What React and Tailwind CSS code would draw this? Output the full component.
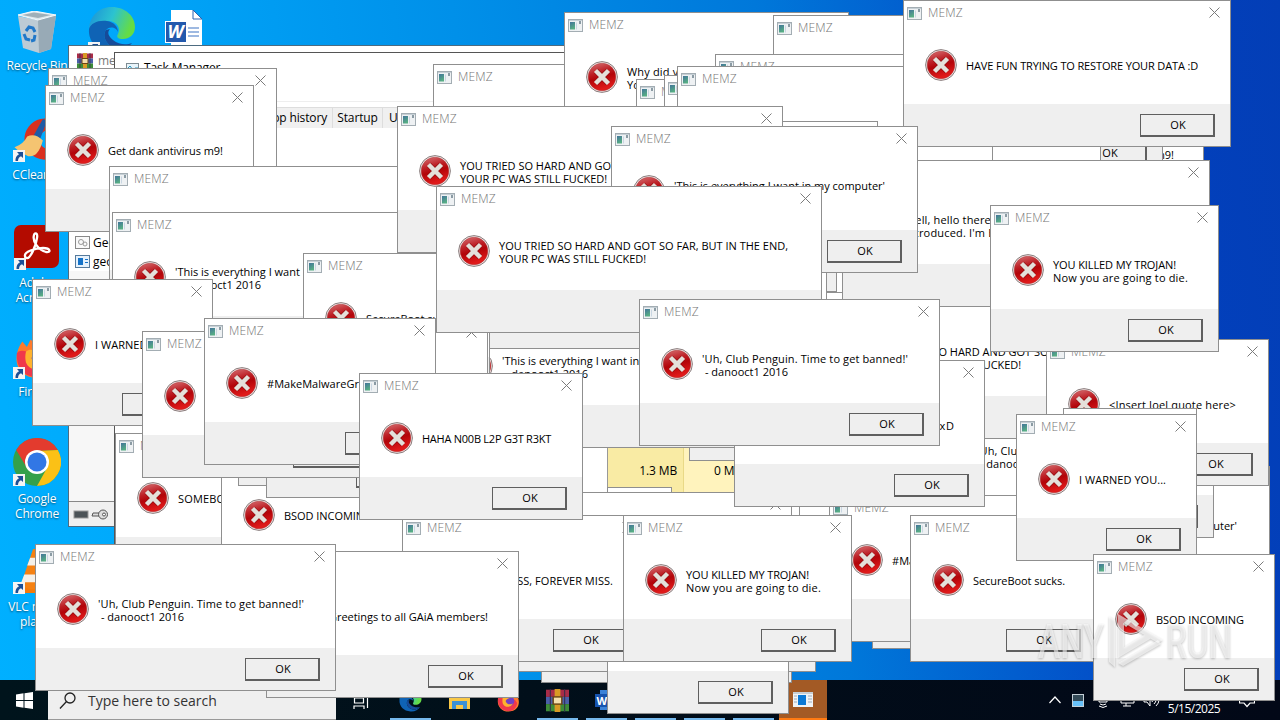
const HARD = ['YOU TRIED SO HARD AND GOT SO FAR, BUT IN THE END,', 'YOUR PC WAS STILL FUCKED!'];
const PENGUIN = ["'Uh, Club Penguin. Time to get banned!'", '\u00a0- danooct1 2016'];
const EVERYTHING = ["'This is everything I want in my computer'", '\u00a0- danooct1 2016'];
const KILLED = ['YOU KILLED MY TROJAN!', 'Now you are going to die.'];

// back to front
const dialogs = [
  { x: 433, y: 64, w: 301 },
  { x: 564, y: 12, w: 285, text: ['Why did you even tried to kill MEMZ?', 'Your PC is fucked anyway.'] },
  { x: 636, y: 79, w: 200 },
  { x: 664, y: 75, w: 200 },
  { x: 773, y: 15, w: 200 },
  { x: 715, y: 54, w: 230 },
  { x: 677, y: 66, w: 270 },
  { x: 700, y: 121, w: 178, bare: true },
  { x: 996, y: 89, w: 208, text: ['Get dank antivirus m9!'] },
  { x: 905, y: 28, w: 258 },
  { x: 905, y: 80, w: 196 },
  { x: 905, y: 80, w: 88, bare: true },
  { x: 903, y: 0, w: 328, text: ['HAVE FUN TRYING TO RESTORE YOUR DATA :D'] },
  { x: 48, y: 68, w: 229 },
  { x: 45, y: 85, w: 209, text: ['Get dank antivirus m9!'] },
  { x: 109, y: 166, w: 330 },
  { x: 112, y: 212, w: 307, text: EVERYTHING },
  { x: 397, y: 106, w: 386, text: HARD },
  { x: 607, y: 487, w: 65, bare: true },
  { x: 689, y: 314, w: 140 },
  { x: 650, y: 145, w: 187 },
  { x: 963, y: 466, w: 307, text: EVERYTHING },
  { x: 914, y: 391, w: 300, text: PENGUIN },
  { x: 811, y: 292, w: 386, text: HARD },
  { x: 842, y: 160, w: 368, text: ["Well, hello there. I don't believe we've been properly", "introduced. I'm Bonzi!"] },
  { x: 872, y: 502, w: 150 },
  { x: 829, y: 495, w: 232, text: ['#MakeMalwareGreatAgain'] },
  { x: 439, y: 301, w: 307, text: EVERYTHING },
  { x: 455, y: 202, w: 372 },
  { x: 611, y: 126, w: 307, text: EVERYTHING },
  { x: 541, y: 536, w: 251 },
  { x: 500, y: 525, w: 316 },
  { x: 740, y: 480, w: 60, bare: true },
  { x: 500, y: 492, w: 292 },
  { x: 607, y: 567, w: 182 },
  { x: 115, y: 433, w: 260, text: ['SOMEBODY'] },
  { x: 221, y: 450, w: 182, text: ['BSOD INCOMING'] },
  { x: 402, y: 515, w: 242, text: ['REST IN PISS, FOREVER MISS.'] },
  { x: 238, y: 339, w: 160 },
  { x: 266, y: 351, w: 181 },
  { x: 303, y: 253, w: 187, text: ['SecureBoot sucks.'] },
  { x: 300, y: 320, w: 188 },
  { x: 436, y: 186, w: 386, text: HARD },
  { x: 32, y: 279, w: 181, text: ['I WARNED YOU...'] },
  { x: 142, y: 331, w: 242, text: [''] },
  { x: 204, y: 318, w: 232, text: ['#MakeMalwareGreatAgain'] },
  { x: 359, y: 373, w: 224, text: ['HAHA N00B L2P G3T R3KT'] },
  { x: 734, y: 360, w: 251, text: ['Get better hax skills lol xD'] },
  { x: 639, y: 299, w: 301, text: PENGUIN },
  { x: 623, y: 515, w: 229, text: KILLED },
  { x: 1046, y: 339, w: 223, text: ['<Insert Joel quote here>'] },
  { x: 1063, y: 408, w: 134, bare: true },
  { x: 990, y: 205, w: 229, text: KILLED },
  { x: 910, y: 515, w: 187, text: ['SecureBoot sucks.'] },
  { x: 1016, y: 414, w: 181, text: ['I WARNED YOU...'] },
  { x: 1093, y: 554, w: 182, text: ['BSOD INCOMING'] },
  { x: 266, y: 551, w: 253, text: ['Greetings to all GAiA members!'] },
  { x: 35, y: 544, w: 301, text: PENGUIN },
];

// rendered width of each message line in the system font
const widths = {
  [HARD[0]]: 289,
  [HARD[1]]: 147,
  [PENGUIN[0]]: 206,
  [PENGUIN[1]]: 86,
  [EVERYTHING[0]]: 211,
  [KILLED[0]]: 123,
  [KILLED[1]]: 135,
  'Get dank antivirus m9!': 115,
  'I WARNED YOU...': 87,
  'BSOD INCOMING': 88,
  'SecureBoot sucks.': 92,
  'HAHA N00B L2P G3T R3KT': 129,
  'HAVE FUN TRYING TO RESTORE YOUR DATA :D': 232,
  '<Insert Joel quote here>': 127,
  'Get better hax skills lol xD': 158,
  'REST IN PISS, FOREVER MISS.': 148,
  'Greetings to all GAiA members!': 159,
  '#MakeMalwareGreatAgain': 137,
};

function Line({ text }) {
  const fit = (el) => {
    if (!el || !widths[text]) return;
    el.style.letterSpacing = '0px';
    const diff = widths[text] - el.getBoundingClientRect().width;
    el.style.letterSpacing = `${diff / text.length}px`;
  };
  return (
    <div className="h-[13px] whitespace-pre tracking-[0.17px]">
      <span ref={fit}>{text}</span>
    </div>
  );
}

function ErrorIcon() {
  return (
    <svg className="h-8 w-8 shrink-0" viewBox="0 0 32 32">
      <defs>
        <linearGradient id="err" x1="0" y1="0" x2="0.3" y2="1">
          <stop offset="0" stopColor="#d9777a" />
          <stop offset="0.4" stopColor="#bd2026" />
          <stop offset="0.6" stopColor="#b30409" />
          <stop offset="1" stopColor="#e01a1a" />
        </linearGradient>
      </defs>
      <circle cx="16" cy="16" r="15.4" fill="#f3e9e9" stroke="#7d7070" strokeWidth="0.9" />
      <circle cx="16" cy="16" r="13.8" fill="url(#err)" stroke="#a33" strokeWidth="0.5" />
      <path d="M9.8 9.8 22.2 22.2M22.2 9.8 9.8 22.2" stroke="#8e1013" strokeWidth="5.6" />
      <path d="M9.500 9.500 22.500 22.500M22.500 9.500 9.500 22.500" stroke="#e4e0da" strokeWidth="4.500" />
    </svg>
  );
}

function AppIcon() {
  return (
    <svg className="h-[13px] w-[15px] shrink-0" viewBox="0 0 15 13">
      <defs>
        <linearGradient id="app" x1="0" y1="0" x2="0.4" y2="1">
          <stop offset="0" stopColor="#42749a" />
          <stop offset="1" stopColor="#57ae84" />
        </linearGradient>
      </defs>
      <rect x="0.5" y="0.5" width="14" height="12" fill="#eef1f3" stroke="#a3adb3" />
      <path d="M1 1.5h13" stroke="#c6d0d6" />
      <rect x="2" y="3" width="5" height="7.5" fill="url(#app)" />
      <path d="M8.5 3.5v7" stroke="#c9d6e2" />
      <rect x="11" y="2" width="2" height="3" fill="#8b9ba4" />
    </svg>
  );
}

function Dialog({ x, y, w, text, bare }) {
  return (
    <div
      className="absolute flex h-[147px] flex-col overflow-hidden border border-[#8f8f8f] bg-white"
      style={{ left: x, top: y, width: w }}
    >
      <div className="flex h-[25px] shrink-0 items-center pl-[3px] pr-[10px]">
        {!bare && (
          <>
            <AppIcon />
            <span className="mb-[2px] ml-[6px] flex-1 text-[12px] font-light tracking-[0.1px] text-[#757575]">MEMZ</span>
            <svg className="mb-[2px] h-[11px] w-[11px] shrink-0" viewBox="0 0 11 11">
              <path d="M0.5 0.5 10.5 10.5M10.5 0.5 0.5 10.5" stroke="#7b7b7b" strokeWidth="1" />
            </svg>
          </>
        )}
      </div>
      <div className="flex h-[78px] shrink-0 items-center pl-[21px]">
        {text && (
          <>
            <ErrorIcon />
            <div className="ml-[9px] pt-[1px] text-[11px] leading-[13px] text-black">
              {text.map((t) => <Line key={t} text={t} />)}
            </div>
          </>
        )}
      </div>
      <div className="flex flex-1 justify-end bg-[#efefef] pr-[15px] pt-[10px]">
        <div className="flex h-[23px] w-[75px] shrink-0 items-center justify-center border border-b-2 border-r-2 border-[#5f5f5f] bg-[#efefef] pl-[2px] text-[11px] text-black">
          OK
        </div>
      </div>
    </div>
  );
}

function Shortcut() {
  return (
    <svg className="absolute bottom-0 left-0 h-3 w-3" viewBox="0 0 12 12">
      <rect width="12" height="12" fill="#f4f4f4" />
      <path d="M4 2h6v6L8 6.200Q5 7.500 5 11H2.500Q2 6.500 6 4.200Z" fill="#1d4f96" />
    </svg>
  );
}

const EdgeArt = () => (
  <svg className="h-full w-full" viewBox="0 0 48 48">
    <defs>
      <linearGradient id="edge1" x1="0" y1="0" x2="1" y2="0.3">
        <stop offset="0" stopColor="#1b8fd8" />
        <stop offset="0.55" stopColor="#2cc3d0" />
        <stop offset="1" stopColor="#65dc45" />
      </linearGradient>
    </defs>
    <path d="M1 23C2 8 13 1 24 1c13 0 23 9 23 20 0 8-6 12-12 12-5 0-7-2-5-5 3-6-1-13-10-13C11 15 3 18 1 23Z" fill="url(#edge1)" />
    <path d="M1 23c2-6 9-9 18-8 7 1 11 6 11 11-1-4-8-7-12-2-5 7 2 18 13 19 5 0 10-3 13-6-4 7-12 11-20 10C10 46 0 36 1 23Z" fill="#0f63b5" />
    <path d="M18 24c-5 7 2 18 13 19 5 0 10-3 13-6-5 2-13 2-19-3-5-4-6-8-3-11Z" fill="#164b99" />
  </svg>
);

const FirefoxArt = () => (
  <svg className="h-full w-full" viewBox="0 0 48 48">
    <path d="M8 7l5 6 4-8 6 6c4-3 4-5 4-8 7 4 10 9 11 13l4-2c5 8 5 20-1 26C34 48 17 50 8 41-1 33 0 18 8 7Z" fill="#ff7a2b" />
    <path d="M2 20c4-5 10-2 15 0 11-2 21 0 25 9-1 11-9 18-20 17C9 45 1 35 2 20Z" fill="#f0384b" />
    <circle cx="25" cy="25" r="11" fill="#7440c5" />
    <path d="M12 18c5-4 9-1 14 1-3 2-6 2-8 6 2 7 9 9 15 5-4 9-17 10-21 0-1-4-1-8 0-12Z" fill="#ffb22d" />
  </svg>
);

const WordArt = () => (
  <svg className="h-full w-full" viewBox="0 0 38 38">
    <path d="M6 0h22l9 9v29H6Z" fill="#fff" />
    <path d="M28 0v9h9Z" fill="#fff" stroke="#2d62b0" />
    <path d="M23 18h11M23 22h11M23 26h11" stroke="#3f74c3" strokeWidth="1.200" />
    <rect x="0.500" y="11.500" width="21" height="21" fill="#2359ad" stroke="#fff" />
    <text x="2.500" y="28" fontSize="18" fontWeight="700" fontStyle="italic" fill="#fff" fontFamily="Open Sans">W</text>
  </svg>
);

const BinArt = () => (
  <svg className="h-full w-full" viewBox="0 0 38 42">
    <path d="M0 5 20 9 38 4 33 38 21 42 5 37Z" fill="#bccbd5" />
    <path d="M20 9 38 4 33 38 21 42Z" fill="#98aab6" />
    <path d="M0 4 16 0 38 4 20 9Z" fill="#dde6ea" stroke="#f7fafb" />
    <path d="M4 4 16 1.500 33 4 20 7Z" fill="#9fb0b9" />
    <path d="m8 20 3-4 4 1 2 4M6 23l2 5 4 1M17 24l-1 5-3 1" fill="none" stroke="#2078c9" strokeWidth="3" />
  </svg>
);

const CCleanerArt = () => (
  <svg className="h-full w-full" viewBox="0 0 48 48">
    <path d="M42 6A21 21 0 1 0 44 42L37 35a10 10 0 1 1-1-20Z" fill="#d9301f" />
    <path d="m30 4 4 2-7 19-7-3Z" fill="#1e5ba6" />
    <path d="M14 22q8-4 16 4-5 18-15 16Q6 38 1 33q9-3 13-11Z" fill="#f5c471" />
  </svg>
);

const AcrobatArt = () => (
  <svg className="h-full w-full" viewBox="0 0 46 44">
    <rect width="45" height="43" rx="7" fill="#b30b00" />
    <path d="M11 31c-1-4 10-8 18-8 8 0 8 5 3 4-7-2-14-10-12-17 1-3 4-2 3 3-1 8-7 21-10 20-2 0-2-1-2-2Z" fill="none" stroke="#fff" strokeWidth="2.300" />
  </svg>
);

const ChromeArt = () => (
  <svg className="h-full w-full" viewBox="0 0 48 48">
    <circle cx="24" cy="24" r="24" fill="#34a04b" />
    <path d="M3.200 12A24 24 0 0 1 44.800 12L24 13 14 30Z" fill="#e33b2e" />
    <path d="M44.800 12A24 24 0 0 1 24 48L34 30 24 13Z" fill="#fbc116" />
    <circle cx="24" cy="24" r="12" fill="#fff" />
    <circle cx="24" cy="24" r="9.500" fill="#3277e5" />
  </svg>
);

const VlcArt = () => (
  <svg className="h-full w-full" viewBox="0 0 48 48">
    <path d="M5 36h38l4 11H1Z" fill="#f57b0b" />
    <path d="M20 2h8l13 38q-17 7-34 0Z" fill="#f58112" />
    <path d="M17 11h14l3 8H14ZM11 28h26l3 8H8Z" fill="#f4f0e9" />
  </svg>
);

function DesktopIcon({ left, top, size, label, art, link = true }) {
  return (
    <div className="absolute flex w-[74px] flex-col items-center" style={{ left, top }}>
      <div className={`relative ${size}`}>
        {art}
        {link && <Shortcut />}
      </div>
      <div className="mt-[5px] whitespace-pre text-center text-[12px] leading-[15px] tracking-[-0.15px] text-white [text-shadow:0_1px_2px_#0008]">
        {label}
      </div>
    </div>
  );
}

function RarArt() {
  return (
    <svg className="h-full w-full" viewBox="0 0 16 16">
      <rect width="16" height="5" y="0.500" fill="#a82c48" />
      <rect width="16" height="5" y="5.500" fill="#4a5fa8" />
      <rect width="16" height="5" y="10.500" fill="#3d8c38" />
      <rect x="6" width="4" height="16" fill="#d89a25" />
      <rect x="5" y="5.500" width="6" height="5" fill="#f3dfad" stroke="#6a4514" />
      <path d="M3 0v16M13 0v16" stroke="#302e48" strokeWidth="0.700" />
    </svg>
  );
}

function ArchiveWindow() {
  return (
    <div className="absolute left-[68px] top-[45px] flex h-[482px] w-[700px] flex-col border border-[#4d6b80] bg-white">
      <div className="flex h-[29px] shrink-0 items-center gap-[5px] pl-2 text-[12px] text-[#777]">
        <div className="h-4 w-4"><RarArt /></div>
        memz
      </div>
      <div className="flex-1 pl-[6px] pt-[158px] text-[12px] text-black">
        <div className="flex h-[19px] items-center gap-[3px]">
          <svg width="15" height="13" viewBox="0 0 15 13">
            <rect x="0.500" y="0.500" width="14" height="12" fill="#f9f9f9" stroke="#888" />
            <circle cx="6" cy="6" r="2.500" fill="none" stroke="#999" />
            <circle cx="10" cy="8" r="2" fill="none" stroke="#999" />
          </svg>
          Geo
        </div>
        <div className="flex h-[19px] items-center gap-[3px]">
          <svg width="15" height="13" viewBox="0 0 15 13">
            <rect x="0.500" y="0.500" width="14" height="12" fill="#e5f1fc" stroke="#557a9c" />
            <rect x="3" y="3" width="5" height="7" fill="#1673c8" />
            <path d="M10 4.500h3M10 7.500h3" stroke="#1673c8" />
          </svg>
          geo
        </div>
        <div className="-ml-[6px] h-[230px] bg-[#f7f7f7]" />
      </div>
      <div className="flex h-[25px] shrink-0 items-center gap-1 border-t border-[#888] bg-[#f0f0f0] pl-1">
        <svg width="36" height="11" viewBox="0 0 36 11">
          <rect x="1" y="2" width="14" height="7" fill="#4c5357" stroke="#999" />
          <path d="M20 4h10v3H19Z" fill="#ddd" stroke="#555" />
          <circle cx="30" cy="5.500" r="4.500" fill="#ddd" stroke="#555" />
          <circle cx="31" cy="5.500" r="1.500" fill="#fff" stroke="#555" />
        </svg>
      </div>
    </div>
  );
}

function TaskManager() {
  return (
    <div className="absolute left-[114px] top-[52px] flex h-[500px] w-[735px] flex-col border border-[#555] bg-white text-[12px] tracking-[-0.15px] text-black">
      <div className="flex h-[30px] shrink-0 items-center gap-[5px] pl-[9px]">
        <svg width="15" height="13" viewBox="0 0 15 13">
          <rect x="2.500" y="1.500" width="12" height="9" fill="#e8f4fa" stroke="#7d8b92" />
          <path d="m3 7 3-3 3 4 2-2h3" stroke="#2292bd" fill="none" />
        </svg>
        Task Manager
      </div>
      <div className="mt-[18px] flex h-[27px] shrink-0 items-end border-t border-[#eee] pl-[148px]">
        <div className="flex h-[21px] w-[70px] items-center justify-end border-r border-t border-[#ddd] bg-[#f0f0f0] pr-[5px]">App history</div>
        <div className="flex h-[21px] w-[50px] items-center justify-center border-r border-t border-[#ddd] bg-[#f0f0f0]">Startup</div>
        <div className="flex h-[21px] w-[50px] items-center border-r border-t border-[#ddd] bg-[#f0f0f0] pl-[6px]">Users</div>
      </div>
      <div className="ml-[492px] mt-[265px] flex h-[104px] items-start border-l border-[#999]">
        <div className="flex h-full w-[76px] justify-end border-r border-[#e9d987] bg-[#f9eba4] pr-[6px] pt-[69px]">1.3 MB</div>
        <div className="flex h-full w-[66px] justify-end bg-[#fff3bd] pr-[8px] pt-[69px]">0 MB</div>
      </div>
    </div>
  );
}

function TaskItem({ children, open }) {
  return (
    <div className="flex h-full w-[49px] justify-center px-1">
      <div className={`flex w-full justify-center border-b-2 pt-[9px] ${open ? 'border-[#76b9ed]' : 'border-transparent'}`}>
        <div className="h-[23px] w-[23px]">{children}</div>
      </div>
    </div>
  );
}

function Taskbar() {
  return (
    <div className="absolute bottom-0 left-0 flex h-[40px] w-full bg-gradient-to-r from-[#00141c] to-[#020817]">
      <div className="flex w-[48px] items-center justify-center">
        <svg width="17" height="17" viewBox="0 0 17 17">
          <path d="M0 2.500 7.500 1.300V8H0ZM8.500 1.200 17 0v8H8.500ZM0 9h7.500v6.700L0 14.500ZM8.500 9H17v8l-8.500-1.200Z" fill="#fff" />
        </svg>
      </div>
      <div className="flex w-[288px] items-center border-b border-[#999] bg-[#efefef] pl-[11px] pt-[2px] text-[14px] text-[#333]">
        <svg className="mr-[11px]" width="18" height="18" viewBox="0 0 18 18">
          <circle cx="11" cy="6" r="5" fill="none" stroke="#222" strokeWidth="1.300" />
          <path d="m7.500 9.500-6.500 7" stroke="#222" strokeWidth="1.300" />
        </svg>
        Type here to search
      </div>
      <div className="flex w-[50px] items-center justify-center">
        <svg width="17" height="17" viewBox="0 0 17 17">
          <path d="M1 0v3h10V0M1 17v-3h10v3M1.500 6h9v5h-9ZM14.500 1v15" fill="none" stroke="#fff" strokeWidth="1.200" />
        </svg>
      </div>
      <TaskItem open><EdgeArt /></TaskItem>
      <TaskItem>
        <svg className="h-full w-full" viewBox="0 0 23 23">
          <path d="M1 2h8l2 3h11v15H1Z" fill="#f9c846" />
          <path d="M4 12h15v8h-4v-4H8v4H4Z" fill="#3b91d5" />
        </svg>
      </TaskItem>
      <TaskItem><FirefoxArt /></TaskItem>
      <TaskItem open><RarArt /></TaskItem>
      <TaskItem open>
        <svg className="h-full w-full" viewBox="0 0 23 23">
          <rect x="5" y="1" width="17" height="20" fill="#3b82d8" />
          <rect y="5" width="14" height="13" fill="#1753ae" />
          <text x="1.500" y="15.500" fontSize="11" fontWeight="700" fill="#fff" fontFamily="Open Sans">W</text>
        </svg>
      </TaskItem>
      <TaskItem open />
      <TaskItem open />
      <TaskItem open />
      <div className="ml-[1px] flex w-[48px] items-center justify-center border-b-2 border-[#ff7a12] bg-[#a35a25]">
        <svg width="20" height="15" viewBox="0 0 20 15">
          <rect width="20" height="15" fill="#f1f3f5" />
          <path d="M0 1h20" stroke="#9da9b2" />
          <rect x="5" y="3" width="8" height="10" fill="#0b79d5" />
          <path d="M15 4h4M15 7h4M15 10h4M1 4h3M1 7h3M1 10h3" stroke="#9aabb9" />
        </svg>
      </div>
      <div className="ml-auto flex items-center gap-[11px] pr-[25px] text-white">
        <svg width="12" height="8" viewBox="0 0 12 8"><path d="m0.500 7 5.500-6 5.500 6" fill="none" stroke="#fff" strokeWidth="1.200" /></svg>
        <svg width="12" height="13" viewBox="0 0 12 13">
          <rect x="0.500" y="0.500" width="11" height="12" fill="#344b58" stroke="#c4d0d8" />
          <rect x="1" y="7" width="10" height="5" fill="#68c2f9" />
        </svg>
        <svg className="ml-[2px]" width="12" height="16" viewBox="0 0 12 16"><path d="M2 2h8v8H2ZM3 12q3 2 6 0M2 14q4 3 8 0" fill="none" stroke="#fff" /></svg>
        <svg width="15" height="14" viewBox="0 0 15 14"><path d="M1 2h13v8H1ZM6 10v3M3 13h8" fill="none" stroke="#fff" /></svg>
        <svg className="ml-[-3px]" width="17" height="14" viewBox="0 0 17 14"><path d="M1 5h3l3-4v12L4 9H1ZM9 5q2 2 0 4M11 3q4 4 0 8M13 1q6 6 0 12" fill="none" stroke="#fff" /></svg>
        <div className="ml-[-4px] mt-[2px] w-[54px] whitespace-nowrap text-center text-[12px] leading-[16px] tracking-[-0.5px]">
          <div>12:06 AM</div>
          <div>5/15/2025</div>
        </div>
        <svg className="ml-[7px]" width="16" height="16" viewBox="0 0 16 16"><path d="M0.500 1h15v10H11l-3 3.500L5 11H0.500Z" fill="none" stroke="#fff" strokeWidth="1.200" /></svg>
      </div>
    </div>
  );
}

function Watermark() {
  return (
    <svg className="absolute left-[1030px] top-[606px] drop-shadow-[0_1px_1px_#0006]" width="210" height="70" viewBox="0 0 210 70">
      <g fill="#fff" fillOpacity="0.600">
        <text x="8" y="52" fontSize="48" fontWeight="500" textLength="66" lengthAdjust="spacingAndGlyphs" fontFamily="Roboto">ANY</text>
        <text x="136" y="52" fontSize="48" fontWeight="500" textLength="66" lengthAdjust="spacingAndGlyphs" fontFamily="Roboto">RUN</text>
        <path d="M79 10v46l6 5V14Z" />
        <path d="M88 8v44l37-22-6-4-25 15V17l34 20 5-3Z" />
        <path d="m88 57 40-23 3 4-38 22Z" />
      </g>
    </svg>
  );
}

export default function App() {
  return (
    <div className="relative h-[720px] w-[1280px] overflow-hidden bg-[linear-gradient(82deg,#00b0ff_0%,#00a8fb_14%,#0090e9_40%,#0078da_62%,#0350c8_80%,#0240bc_90%,#033eb6_100%)] font-['Open_Sans','Noto_Sans',sans-serif]">
      <DesktopIcon left={0} top={11} size="h-[42px] w-[38px]" label="Recycle Bin" art={<BinArt />} link={false} />
      <DesktopIcon left={75} top={6} size="h-[48px] w-[48px]" label="Microsoft" art={<EdgeArt />} />
      <DesktopIcon left={147} top={10} size="h-[38px] w-[38px]" label="memz" art={<WordArt />} link={false} />
      <DesktopIcon left={0} top={115} size="h-[47px] w-[48px]" label="CCleaner" art={<CCleanerArt />} />
      <DesktopIcon left={0} top={224} size="h-[46px] w-[46px]" label={'Adobe\nAcrobat'} art={<AcrobatArt />} />
      <DesktopIcon left={0} top={335} size="h-[44px] w-[48px]" label="Firefox" art={<FirefoxArt />} />
      <DesktopIcon left={0} top={438} size="h-[48px] w-[48px]" label={'Google\nChrome'} art={<ChromeArt />} />
      <DesktopIcon left={0} top={547} size="h-[47px] w-[48px]" label={'VLC media\nplayer'} art={<VlcArt />} />
      <ArchiveWindow />
      <TaskManager />
      <Taskbar />
      {dialogs.map((d) => <Dialog key={`${d.x}-${d.y}-${d.w}`} {...d} />)}
      <Watermark />
    </div>
  );
}
